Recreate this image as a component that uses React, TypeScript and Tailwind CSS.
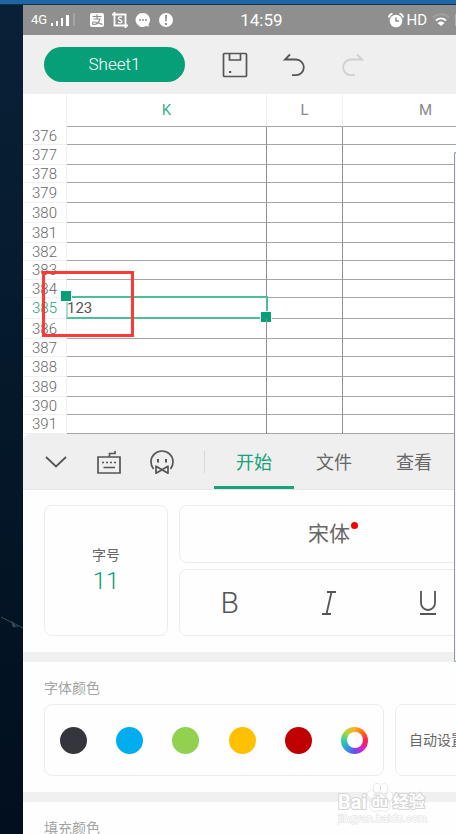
import type { ReactNode } from "react";

const sheetRows = [
  { id: 376, height: "h-[18px]" },
  { id: 377, height: "h-[20px]" },
  { id: 378, height: "h-[18px]" },
  { id: 379, height: "h-[20px]" },
  { id: 380, height: "h-[20px]" },
  { id: 381, height: "h-[20px]" },
  { id: 382, height: "h-[18px]" },
  { id: 383, height: "h-[19px]" },
  { id: 384, height: "h-[18px]" },
  { id: 385, height: "h-[21px]", value: "123" },
  { id: 386, height: "h-[20px]" },
  { id: 387, height: "h-[18px]" },
  { id: 388, height: "h-[20px]" },
  { id: 389, height: "h-[20px]" },
  { id: 390, height: "h-[18px]" },
  { id: 391, height: "h-[19px]" },
];

const fontColors = [
  { name: "黑色", className: "bg-[#35353d]" },
  { name: "蓝色", className: "bg-[#00adef]" },
  { name: "绿色", className: "bg-[#92d050]" },
  { name: "黄色", className: "bg-[#ffc000]" },
  { name: "红色", className: "bg-[#c00000]" },
];

const tabs = ["开始", "文件", "查看"];

function StatusBar() {
  return (
    <div className="flex h-[30px] items-center bg-[#8f8f8f] pl-2 text-white">
      <span className="text-[13px] leading-4">4G</span>
      <svg className="ml-1 h-4 w-6" viewBox="0 0 24 16" fill="currentColor">
        <path d="M0 11h2v3H0zM5 9h2v5H5zM10 6h2v8h-2zM15 3h3v11h-3z" />
        <path d="M22 1h2v13h-2z" opacity="0.2" />
      </svg>
      <div className="ml-3.5 flex items-center gap-[7px]">
        <svg className="h-4 w-4" viewBox="0 0 16 16" fill="none">
          <rect x="1" y="1" width="14" height="14" rx="2" fill="#fff" />
          <path
            d="M3.500 4.500h9M8 2.500v4.500M4.500 7h6.500c-1 3-3.500 5.500-6 5.500-2 0-2-2.500 0-2.500 3 0 5 1 8.500 2.500"
            stroke="#8f8f8f"
            strokeWidth="1.200"
          />
        </svg>
        <svg className="h-4 w-4" viewBox="0 0 16 16" fill="none" stroke="#fff">
          <path d="M0 2.500h13.500V16M2.500 0v13.500H16" strokeWidth="1.800" />
          <path
            d="M10 5.500C9 4.600 6.300 4.600 6.300 6.300S10 7.800 10 9.500 7 11.200 6 10"
            strokeWidth="1.300"
          />
        </svg>
        <svg className="h-4 w-4" viewBox="0 0 16 16" fill="#fff">
          <path d="M8 1a7 7 0 0 1 5.500 11.300l.5 2.200-3-.4A7 7 0 1 1 8 1z" />
          <g fill="#8f8f8f">
            <circle cx="5" cy="8" r="1" />
            <circle cx="8" cy="8" r="1" />
            <circle cx="11" cy="8" r="1" />
          </g>
        </svg>
        <svg className="h-4 w-4" viewBox="0 0 16 16" fill="#fff">
          <circle cx="8" cy="8" r="7" />
          <path d="M7 3h2l-.3 6.500H7.300zM7 11h2v2H7z" fill="#8f8f8f" />
        </svg>
      </div>
      <time className="ml-[66px] text-[17px] leading-5">14:59</time>
      <div className="ml-auto flex items-center">
        <svg className="h-4 w-4" viewBox="0 0 16 16" fill="none">
          <circle cx="8" cy="9" r="6.300" fill="#fff" />
          <path
            d="M1 5.500c0-2 1.500-3.500 3.500-4M15 5.500c0-2-1.500-3.500-3.500-4"
            stroke="#fff"
            strokeWidth="1.800"
          />
          <path d="M8 5.500V9h3" stroke="#8f8f8f" strokeWidth="1.500" />
        </svg>
        <span className="ml-0.5 text-[15px] leading-5">HD</span>
        <svg className="ml-1 h-4 w-5" viewBox="0 0 20 16" fill="none" stroke="#fff">
          <path d="M2 5.500c4.500-4.500 11.500-4.500 16 0" opacity="0.150" strokeWidth="2" />
          <path d="M5 8.500c3-2.800 7-2.800 10 0" strokeWidth="2" />
          <path d="M6.500 11c2-2 5-2 7 0L10 14z" fill="#fff" stroke="none" />
        </svg>
        <span className="ml-1 h-3 w-px bg-white/30" />
      </div>
    </div>
  );
}

function IconButton({
  label,
  width,
  disabled,
  children,
}: {
  label: string;
  width: string;
  disabled?: boolean;
  children: ReactNode;
}) {
  return (
    <button
      type="button"
      aria-label={label}
      disabled={disabled}
      className={`flex shrink-0 items-center justify-center ${width}`}
    >
      {children}
    </button>
  );
}

function Toolbar() {
  return (
    <div className="flex h-[59px] items-center bg-[#efefef] pl-[21px] text-[#555]">
      <button
        type="button"
        className="mr-5 h-[35px] w-[141px] shrink-0 rounded-full bg-[#079f77] text-[17px] font-light text-white"
      >
        Sheet1
      </button>
      <IconButton label="保存" width="w-[59px]">
        <svg className="h-[26px] w-[26px]" viewBox="0 0 26 26" fill="none" stroke="currentColor">
          <rect x="1.500" y="1.500" width="23" height="23" rx="1" strokeWidth="1.700" />
          <path d="M7.500 2v6h11V2" strokeWidth="1.700" />
          <path d="M7 20h2.200" strokeWidth="2" />
        </svg>
      </IconButton>
      <IconButton label="撤销" width="w-[59px]">
        <svg className="h-6 w-6" viewBox="0 0 24 24" fill="none" stroke="currentColor">
          <path d="M8 1.500L3 6.500H14a7.800 7.800 0 0 1 0 15.600H10" strokeWidth="1.800" />
        </svg>
      </IconButton>
      <IconButton label="恢复" width="w-[59px]" disabled>
        <svg className="h-6 w-6 text-[#cfcfcf]" viewBox="0 0 24 24" fill="none" stroke="currentColor">
          <path d="M16 1.500l5 5H10a7.800 7.800 0 0 0 0 15.600h4" strokeWidth="1.800" />
        </svg>
      </IconButton>
    </div>
  );
}

function Sheet() {
  return (
    <div className="relative overflow-hidden bg-white">
      <table className="w-[485px] table-fixed border-separate border-spacing-0 text-[15px] leading-4 font-light">
        <thead>
          <tr className="h-[33px] text-[#888]">
            <th className="w-11 border-r border-[#f0f0f0]" aria-label="行号" />
            <th className="w-[200px] border-r border-b border-r-[#f0f0f0] border-b-[#a6a6a6] p-0 font-normal text-[#3aae8c]">
              K
            </th>
            <th className="w-[76px] border-r border-b border-r-[#f0f0f0] border-b-[#a6a6a6] p-0 font-normal">L</th>
            <th className="w-[165px] border-b border-[#a6a6a6] p-0 font-normal">M</th>
          </tr>
        </thead>
        <tbody>
          {sheetRows.map((row) => (
            <tr key={row.id} className={row.height}>
              <th
                className={`border-r border-b border-[#f0f0f0] p-0 font-light ${
                  row.value ? "text-[#16a27b]" : "text-[#666]"
                }`}
              >
                {row.id}
              </th>
              <td className="relative border-r border-b border-r-[#8e8e8e] border-b-[#a6a6a6] p-0 font-normal text-[#555]">
                {row.value}
                {row.value && (
                  <span className="absolute -inset-px -top-0.5 -right-0.5 border-2 border-[#4fbd98] border-l-[#a5dccb]">
                    <span className="absolute -top-2 -left-2 size-3 border border-white bg-[#079f77]" />
                    <span className="absolute -right-1.5 -bottom-1.5 size-3 border border-white bg-[#079f77]" />
                  </span>
                )}
              </td>
              <td className="border-r border-b border-r-[#8e8e8e] border-b-[#a6a6a6] p-0" />
              <td className="border-b border-[#a6a6a6] p-0" />
            </tr>
          ))}
        </tbody>
      </table>
      <div className="absolute top-[177px] left-[19px] h-[66px] w-[92px] border-3 border-[#fc3a37]" />
    </div>
  );
}

function PanelTabs() {
  return (
    <div className="flex h-14 overflow-hidden rounded-tl-lg border-b border-[#e6e6e6] bg-[#efefef] pl-1.5 text-[#555]">
      <IconButton label="收起" width="w-[53px]">
        <svg className="h-3 w-[22px]" viewBox="0 0 22 12" fill="none" stroke="currentColor">
          <path d="M1 1l10 9.500L21 1" strokeWidth="1.800" />
        </svg>
      </IconButton>
      <IconButton label="键盘" width="w-[53px]">
        <svg className="h-6 w-6" viewBox="0 0 24 24" fill="none" stroke="currentColor" strokeWidth="1.700">
          <path d="M1 7h22v16H1zM12.500 7V3.500h5.500V1" />
          <path d="M5 12.500h14" strokeDasharray="2 2" />
          <path d="M6.500 17.500h11.500" />
        </svg>
      </IconButton>
      <IconButton label="助手" width="w-[53px]">
        <svg className="h-6 w-6" viewBox="0 0 24 24" fill="none" stroke="currentColor" strokeWidth="1.700">
          <path d="M3.500 19a11 11 0 1 1 17 0" />
          <path d="M8 9v3.500M16 9v3.500" strokeWidth="2" />
          <path d="M6 16.200l6 3.600 6-3.600v7l-6-3.400-6 3.400z" strokeLinejoin="round" />
        </svg>
      </IconButton>
      <span className="mr-[9px] ml-4 h-[22px] w-px shrink-0 self-center bg-[#d9d9d9]" />
      {tabs.map((tab, i) => (
        <button
          key={tab}
          type="button"
          className={`w-20 shrink-0 border-b-3 pt-1.5 text-lg ${
            i === 0 ? "border-[#16a27b] text-[#16a27b]" : "border-transparent text-[#666]"
          }`}
        >
          {tab}
        </button>
      ))}
    </div>
  );
}

function FontSection() {
  return (
    <section className="flex h-[162px] gap-[11px] overflow-hidden bg-[#fefefe] pt-[15px] pb-4 pl-[21px] text-[#555]">
      <button
        type="button"
        className="flex w-[124px] shrink-0 flex-col items-center justify-center rounded-lg border border-[#ececec]"
      >
        <span className="text-sm text-[#666]">字号</span>
        <span className="text-2xl font-light text-[#079f77]">11</span>
      </button>
      <div className="flex w-[300px] shrink-0 flex-col gap-1.5">
        <button
          type="button"
          className="h-[58px] rounded-lg border border-[#ececec] text-[21px] leading-7 text-[#666]"
        >
          <span className="relative">
            宋体
            <span className="absolute top-0 -right-2 size-[7px] rounded-full bg-[#f90000]" />
          </span>
        </button>
        <div className="grid flex-1 grid-cols-3 rounded-lg border border-[#ececec]">
          <IconButton label="加粗" width="w-full">
            <span className="text-3xl font-light">B</span>
          </IconButton>
          <IconButton label="斜体" width="w-full">
            <svg className="h-6 w-4" viewBox="0 0 16 24" fill="none" stroke="currentColor" strokeWidth="1.800">
              <path d="M6 1h9M1 23h9M10.500 1l-5 22" />
            </svg>
          </IconButton>
          <IconButton label="下划线" width="w-full">
            <svg className="h-6 w-4" viewBox="0 0 16 24" fill="none" stroke="currentColor" strokeWidth="1.800">
              <path d="M1 0v12a7 7 0 0 0 14 0V0M0 23h16" />
            </svg>
          </IconButton>
        </div>
      </div>
    </section>
  );
}

function ColorSection({ title }: { title: string }) {
  return (
    <section className="h-[140px] shrink-0 overflow-hidden border-t-10 border-[#f0f0f0] bg-[#fefefe] pt-4 pl-[21px]">
      <h2 className="text-sm text-[#a3a3a3]">{title}</h2>
      <div className="mt-1.5 flex h-[72px] gap-[11px]">
        <div className="grid w-[340px] shrink-0 grid-cols-6 items-center justify-items-center rounded-lg border border-[#ececec]">
          {fontColors.map((color) => (
            <button
              key={color.name}
              type="button"
              aria-label={color.name}
              className={`size-[27px] rounded-full ${color.className}`}
            />
          ))}
          <button
            type="button"
            aria-label="更多颜色"
            className="flex size-[27px] items-center justify-center rounded-full bg-[conic-gradient(#ffb020,#ff6a1a,#fb1e4e,#e01fc8,#6a4cf0,#2b9fe0,#2fd0a0,#b5d43a,#ffb020)]"
          >
            <span className="size-4 rounded-full bg-white" />
          </button>
        </div>
        <button
          type="button"
          className="w-[84px] shrink-0 rounded-lg border border-[#ececec] text-sm whitespace-nowrap text-[#666]"
        >
          自动设置
        </button>
      </div>
    </section>
  );
}

function Watermark() {
  return (
    <div className="pointer-events-none absolute right-7 bottom-2 flex w-[90px] flex-col text-white">
      <div className="flex items-end font-bold [-webkit-text-stroke:2px_#d4d4d4] [paint-order:stroke_fill]">
        <span className="text-xl leading-5">Bai</span>
        <span className="relative flex h-[29px] w-[26px] shrink-0 items-end justify-center">
          <svg className="absolute inset-0 h-full w-full" viewBox="0 0 26 29" fill="#fff" stroke="#d4d4d4">
            <ellipse cx="4" cy="11" rx="3" ry="4" />
            <ellipse cx="10" cy="5" rx="3.200" ry="4.500" />
            <ellipse cx="17" cy="5.500" rx="3.200" ry="4.500" />
            <ellipse cx="22.500" cy="13" rx="3" ry="4" />
            <path d="M13 11c4 0 5 5 8 7.500 4 4 1.500 9.500-3 9.500-2 0-3-.5-5-.5s-3 .5-5 .5c-4.500 0-7-5-3-9.500C8 15.500 9 11 13 11z" />
          </svg>
          <span className="relative text-sm leading-5">du</span>
        </span>
        <span className="text-base leading-5 whitespace-nowrap">经验</span>
      </div>
      <span className="text-[11px] leading-3.5 [-webkit-text-stroke:1px_#dedede] [paint-order:stroke_fill]">
        jingyan.baidu.com
      </span>
    </div>
  );
}

export default function App() {
  return (
    <div className="relative flex h-screen flex-col overflow-hidden bg-linear-to-b from-[#092137] to-[#020f1e] font-['Roboto','Noto_Sans_CJK_SC',sans-serif]">
      <div className="h-[5px] shrink-0 border-b border-[#14324d] bg-[#1f65a3]" />
      <svg
        className="absolute top-[614px] left-0 h-5 w-6"
        viewBox="0 0 24 20"
        fill="none"
        stroke="#3b4d58"
      >
        <path d="M1 3l22 11" />
        <path d="M12 7l3 5 3 0-5 1z" fill="#4a5d66" strokeWidth="0.500" />
      </svg>
      <main className="ml-[23px] min-h-0 flex-1 overflow-hidden bg-white">
        <StatusBar />
        <Toolbar />
        <Sheet />
        <PanelTabs />
        <FontSection />
        <ColorSection title="字体颜色" />
        <ColorSection title="填充颜色" />
      </main>
      <div className="absolute top-[152px] right-0 h-[510px] w-0.5 rounded-l-sm border-y border-l border-[#8a96a6] bg-[#f4f8f8]" />
      <Watermark />
    </div>
  );
}
